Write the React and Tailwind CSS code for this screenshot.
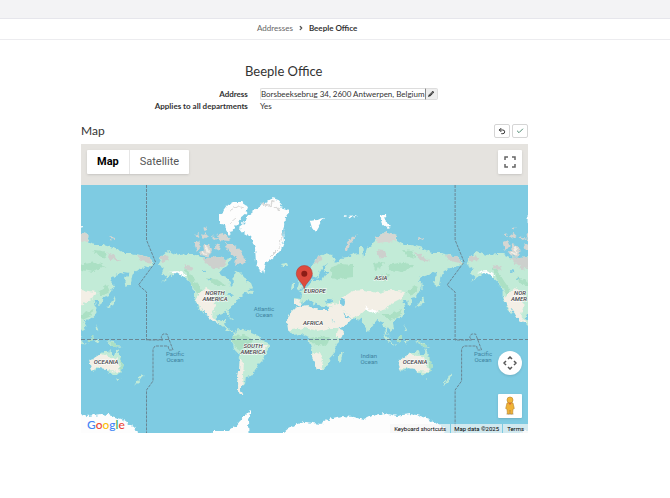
import React from "react";
import { FaPencilAlt } from "react-icons/fa";
import { Check, ChevronRight, Undo2 } from "lucide-react";

const WORLD_WIDTH = 308.6;

const continents = [
  // north america
  "M158 264 L161 257 L168 251 L174 254 L181 255 L188 254 L194 254 L201 257 L211 258 L219 257 L226 259 L232 258 L228 264 L224 268 L220 273 L224 277 L229 279 L231 287 L234 284 L233 275 L235 271 L239 272 L244 277 L247 281 L251 283 L253 288 L246 290 L254 291 L252 294 L245 293 L241 297 L237 300 L234 305 L227 310 L231 316 L229 316 L226 312 L218 314 L217 319 L220 322 L223 320 L226 320 L224 324 L227 328 L230 330 L234 331 L233 333 L228 331 L223 326 L217 323 L210 320 L206 313 L202 308 L204 315 L200 310 L197 303 L194 297 L194 291 L190 283 L183 276 L175 273 L170 277 L162 282 L167 277 L162 273 L164 268 Z",
  // south america
  "M233 334 L238 329 L244 330 L251 332 L256 334 L259 337 L261 341 L266 342 L270 344 L270 348 L267 351 L264 359 L259 364 L255 371 L251 376 L246 377 L245 384 L241 387 L241 391 L243 396 L240 394 L237 390 L237 382 L239 372 L240 356 L234 349 L232 341 Z",
  // europe and asia
  "M294 304 L294 298 L301 299 L302 294 L299 291 L305 288 L310 283 L312 277 L313 282 L322 280 L325 275 L331 272 L324 272 L326 266 L328 263 L323 266 L320 271 L318 278 L315 277 L312 273 L311 267 L316 258 L324 253 L332 255 L336 260 L332 262 L337 263 L341 258 L347 257 L354 254 L359 253 L359 247 L362 247 L364 257 L367 248 L372 245 L376 238 L387 232 L397 235 L397 241 L404 245 L412 245 L419 247 L427 250 L432 253 L441 253 L449 255 L457 257 L464 263 L459 266 L454 267 L444 271 L441 275 L439 285 L435 287 L434 280 L438 273 L432 272 L427 275 L421 277 L419 281 L422 285 L419 292 L416 297 L412 298 L411 304 L408 305 L407 300 L403 300 L405 307 L405 313 L400 318 L395 320 L393 323 L394 328 L390 331 L387 327 L387 332 L390 337 L386 333 L385 328 L382 322 L377 320 L371 327 L368 332 L364 325 L361 320 L357 319 L350 318 L343 313 L347 318 L352 319 L347 324 L337 328 L333 320 L328 312 L329 307 L322 307 L319 306 L316 302 L314 306 L311 301 L307 300 L303 303 L300 306 Z",
  // africa
  "M295 308 L302 306 L310 305 L312 308 L318 310 L327 310 L330 312 L332 320 L338 329 L344 330 L342 337 L336 343 L335 352 L330 358 L328 365 L322 370 L317 370 L312 357 L312 350 L309 342 L308 337 L300 334 L293 335 L288 329 L287 320 L291 312 Z",
  // australia
  "M398 361 L406 356 L412 352 L416 352 L419 350 L420 355 L424 355 L426 349 L429 357 L432 366 L430 372 L424 375 L417 372 L415 369 L409 368 L401 371 L399 366 Z",
  // smaller islands
  "M343 351 L341 361 L338 362 L338 356 Z",
  "M425 378 L428 378 L426 380 Z",
  "M451 373 L452 376 L447 383 L443 385 L448 378 Z",
  "M414 341 L422 342 L430 348 L424 347 L419 344 Z",
  "M397 339 L402 335 L402 341 L398 342 Z",
  "M383 333 L387 337 L392 343 L398 345 L391 344 L386 339 Z",
  "M404 340 L408 340 L406 344 Z",
  "M404 325 L407 331 L405 332 Z",
  "M423 296 L424 300 L422 305 L415 308 L420 302 Z",
  "M422 283 L423 287 L421 292 Z",
  "M298 280 L303 288 L297 290 Z",
  "M292 284 L295 283 L295 288 L291 289 Z",
  "M280 264 L287 263 L288 267 L282 267 Z",
  "M225 316 L234 319 L233 320 Z",
];

const greyIslands = [
  "M194 243 L199 241 L201 246 L197 251 Z",
  "M203 244 L208 245 L212 250 L209 257 L201 255 L199 252 L204 250 Z",
  "M201 236 L205 233 L208 236 L204 239 Z",
  "M210 236 L219 238 L214 240 Z",
  "M203 228 L207 226 L206 230 Z",
  "M195 235 L199 233 L198 237 Z",
  "M217 235 L222 233 L231 239 L229 241 L219 240 Z",
  "M225 244 L232 244 L239 249 L243 256 L246 264 L240 263 L235 266 L236 258 L229 252 Z",
  "M216 244 L220 246 L219 250 L215 248 Z",
  "M345 251 L346 245 L350 239 L358 234 L351 242 L348 250 Z",
  "M376 238 L387 232 L397 235 L396 241 L386 242 L378 243 Z",
  "M418 237 L424 238 L423 240 L419 239 Z",
];

const iceIslands = [
  "M223 212 L228 205 L234 202 L241 202 L248 207 L246 213 L241 217 L238 224 L234 228 L229 235 L226 230 L225 225 L219 223 L219 215 Z",
  "M239 227 L244 223 L248 215 L258 207 L266 202 L273 198 L281 201 L280 207 L290 210 L285 218 L284 226 L283 232 L284 242 L281 250 L273 258 L266 263 L263 273 L259 271 L256 262 L255 248 L251 237 L244 233 Z",
  "M310 221 L316 220 L324 218 L321 222 L315 232 L312 228 Z",
  "M342 217 L347 216 L345 218 Z",
  "M348 216 L357 215 L352 218 Z",
  "M380 214 L385 215 L386 222 L391 227 L387 228 L382 224 Z",
  "M212 445 L213 431 L228 431 L236 426 L244 416 L251 409 L248 420 L249 445 Z",
  "M283 445 L284 432 L289 428 L295 425 L305 422 L321 424 L329 419 L341 416 L354 417 L364 420 L372 416 L384 413 L397 416 L409 414 L417 415 L430 419 L437 424 L444 427 L448 445 Z",
];

const deepGreen = [
  "M330 268 L340 264 L353 265 L353 277 L338 279 L332 277 Z",
  "M373 264 L384 262 L380 268 L375 270 Z",
  "M388 265 L404 262 L414 266 L402 272 L390 270 Z",
  "M374 276 L390 275 L386 280 L377 281 Z",
  "M402 250 L412 251 L416 258 L407 256 Z",
  "M232 336 L244 335 L253 339 L248 346 L240 350 L234 347 Z",
  "M308 338 L326 336 L331 341 L324 346 L313 344 Z",
  "M184 267 L190 272 L196 282 L204 293 L201 300 L195 290 L188 279 Z",
  "M206 277 L218 280 L226 286 L216 286 Z",
  "M381 314 L391 314 L402 309 L400 316 L391 320 Z",
  "M407 292 L416 285 L418 291 L410 296 Z",
  "M429 355 L432 358 L432 370 L429 372 Z",
  "M396 335 L402 335 L402 342 L397 342 Z",
  "M416 341 L429 346 L425 348 Z",
];

const dryLand = [
  "M284 306 L300 304 L333 309 L342 328 L330 328 L318 331 L304 328 L284 331 Z",
  "M328 307 L340 306 L352 318 L347 325 L337 329 L333 321 Z",
  "M343 297 L352 291 L364 290 L378 293 L390 290 L405 292 L402 298 L392 303 L387 309 L377 312 L367 309 L361 314 L352 318 L344 310 L337 308 L326 305 L339 303 Z",
  "M195 298 L206 288 L214 292 L215 306 L212 316 L218 323 L208 320 L200 308 Z",
  "M238 355 L244 363 L243 375 L244 390 L243 397 L237 392 Z",
  "M396 359 L410 354 L424 358 L429 372 L416 371 L406 367 L399 372 Z",
  "M311 355 L320 352 L323 360 L321 371 L315 371 Z",
  "M338 327 L346 329 L341 338 L336 338 Z",
  "M293 299 L301 300 L300 306 L294 305 Z",
  "M260 345 L267 345 L262 352 Z",
];

const greyLand = [
  "M202 258 L213 256 L228 259 L223 267 L213 269 L206 263 Z",
  "M160 257 L167 255 L170 260 L162 262 Z",
  "M184 264 L191 266 L194 271 L187 270 Z",
  "M376 250 L384 251 L386 257 L380 259 Z",
  "M415 252 L422 255 L430 262 L420 260 Z",
  "M446 255 L458 257 L462 263 L454 262 L448 260 Z",
  "M314 262 L318 257 L323 256 L317 264 Z",
];

const iceLand = [
  "M168 272 L178 271 L187 275 L184 277 L177 274 Z",
  "M364 305 L369 309 L378 311 L375 314 L366 309 Z",
];

const dateLine =
  "M146.5 185 V240 L155.5 262 L138.5 285 L146.5 292 V340 H163 L161 337 L163 334 H167 L173 350 H169 L168 346 H155 L153 349 V381 L146.5 390 V433";

const continentLabels = [
  { x: 215, y: 295, lines: ["NORTH", "AMERICA"] },
  { x: 253, y: 348, lines: ["SOUTH", "AMERICA"] },
  { x: 315, y: 293, lines: ["EUROPE"] },
  { x: 313, y: 325, lines: ["AFRICA"] },
  { x: 381, y: 280, lines: ["ASIA"] },
  { x: 106, y: 364, lines: ["OCEANIA"] },
  { x: 415, y: 364, lines: ["OCEANIA"] },
];

const oceanLabels = [
  { x: 264, y: 311, lines: ["Atlantic", "Ocean"] },
  { x: 369, y: 358, lines: ["Indian", "Ocean"] },
  { x: 175, y: 356, lines: ["Pacific", "Ocean"] },
  { x: 483, y: 356, lines: ["Pacific", "Ocean"] },
];

const Shapes = ({ paths, fill }) => (
  <g fill={fill}>
    {paths.map((d) => (
      <path key={d} d={d} />
    ))}
  </g>
);

const MapLabel = ({ x, y, lines }) => (
  <text x={x} y={y}>
    {lines.map((line, i) => (
      <tspan key={line} x={x} y={y + i * 6}>
        {line}
      </tspan>
    ))}
  </text>
);

const WorldMap = () => {
  const copies = [-WORLD_WIDTH, 0, WORLD_WIDTH];

  return (
    <svg
      viewBox="81 144 447 289"
      preserveAspectRatio="xMidYMid slice"
      className="absolute inset-0 w-full h-full"
      role="img"
      aria-label="World map"
    >
      <defs>
        <filter id="coast" x="0" y="0" width="100%" height="100%">
          <feTurbulence type="fractalNoise" baseFrequency="0.25" numOctaves="3" seed="4" />
          <feDisplacementMap in="SourceGraphic" scale="5" xChannelSelector="R" yChannelSelector="G" />
        </filter>
        <clipPath id="land">
          {continents.map((d) => (
            <path key={d} d={d} />
          ))}
        </clipPath>
        <g id="world">
          <Shapes paths={continents} fill="#c2ebd7" />
          <g clipPath="url(#land)">
            <Shapes paths={deepGreen} fill="#abe0c4" />
            <Shapes paths={dryLand} fill="#f3efe6" />
            <Shapes paths={greyLand} fill="#cdd0cd" />
            <Shapes paths={iceLand} fill="#ffffff" />
          </g>
          <Shapes paths={greyIslands} fill="#d5d6d2" />
          <Shapes paths={iceIslands} fill="#fdfdfd" />
          <g fill="none" stroke="#d9d9d8">
            <path d="M262 203 L270 206 L274 201 M274 207 L281 210" strokeWidth="2" />
            <path d="M229 211 L238 206 L244 208 M228 224 L236 217 M283 232 L279 248 L269 258" />
          </g>
          <path d="M206 246 L208 253 M202 253 L207 254" fill="none" stroke="#f3efe6" strokeWidth="2" />
          <g fill="#7ecbe2">
            <ellipse cx="329" cy="301" rx="4" ry="2" />
            <ellipse cx="343" cy="302" rx="2" ry="4" />
            <path d="M343 312 L350 319 L347 318 Z" />
            <path d="M202 270 L206 271 L203 273 Z M207 278 L212 279 L208 280 Z" />
            <ellipse cx="231" cy="295" rx="3" ry="1" />
          </g>
        </g>
      </defs>

      <rect x="81" y="144" width="447" height="42" fill="#e5e3df" />
      <rect x="81" y="185" width="447" height="248" fill="#7ecbe2" />

      <g filter="url(#coast)">
        <rect x="60" y="185" width="500" height="270" fill="none" />
        {copies.map((dx) => (
          <use key={dx} href="#world" x={dx} />
        ))}
      </g>

      <g fill="none" stroke="#6a8794" strokeDasharray="3 1">
        <path d={dateLine} />
        <path d={dateLine} transform={`translate(${WORLD_WIDTH} 0)`} />
        <path d="M81 339.5 H528" strokeDasharray="4 2" />
      </g>

      <g textAnchor="middle" fontFamily="Roboto, sans-serif" fontSize="6">
        <g fontStyle="italic" fontWeight="500" fill="#3c4043" stroke="#ffffff" strokeWidth="1" paintOrder="stroke">
          {continentLabels.map((label) => (
            <MapLabel key={label.x} {...label} />
          ))}
          <g textAnchor="start">
            <text x="514" y="295">NOR</text>
            <text x="511" y="301">AMER</text>
          </g>
        </g>
        <g fill="#3f83a0">
          {oceanLabels.map((label) => (
            <MapLabel key={label.x} {...label} />
          ))}
        </g>
      </g>

      <path
        d="M304.3 288.5 C303.3 283 296.3 279.5 296.3 273.5 A8 8 0 0 1 312.3 273.5 C312.3 279.5 305.3 283 304.3 288.5 Z"
        fill="#dd4b3e"
        stroke="#b93a30"
        strokeWidth="0.6"
      />
      <circle cx="304.3" cy="273.7" r="3" fill="#8c1d16" />
    </svg>
  );
};

const Pegman = () => (
  <svg viewBox="0 0 12 20" className="w-3 h-5">
    <ellipse cx="6" cy="18" rx="4" ry="1" fill="#d8d8d8" />
    <path
      d="M3 7 Q6 5.5 9 7 L10.3 12.5 L9 13 L8.6 18 H6.5 L6 14 L5.5 18 H3.4 L3 13 L1.7 12.5 Z"
      fill="#efb236"
      stroke="#b98526"
      strokeWidth="0.6"
    />
    <path d="M4 6.5 L6 9 L8 6.5 Z" fill="#e0603c" />
    <circle cx="6" cy="4" r="3" fill="#f2b53a" stroke="#b98526" strokeWidth="0.6" />
  </svg>
);

const GoogleLogo = () => (
  <a
    href="#google"
    aria-label="Google"
    className="font-['Lato'] text-[12px] leading-4 font-medium [text-shadow:0_0_1px_#fff,0_0_1px_#fff,0_0_2px_#fff]"
  >
    <span className="text-[#4285f4]">G</span>
    <span className="text-[#ea4335]">o</span>
    <span className="text-[#fbbc05]">o</span>
    <span className="text-[#4285f4]">g</span>
    <span className="text-[#34a853]">l</span>
    <span className="text-[#ea4335]">e</span>
  </a>
);

const MapPanel = () => {
  return (
    <div className="relative h-[289px] overflow-hidden bg-[#7ecbe2] font-['Roboto',sans-serif]">
      <WorldMap />

      <div className="absolute top-1.5 left-1.5 flex h-6 bg-white rounded-[1px] shadow text-[11px]">
        <button className="px-2.5 font-bold text-black border-r border-[#e6e6e6]">Map</button>
        <button className="px-2.5 text-[#565656]">Satellite</button>
      </div>

      <button
        aria-label="Toggle fullscreen view"
        className="absolute top-1.5 right-1.5 w-6 h-6 flex items-center justify-center bg-white rounded-[1px] shadow"
      >
        <svg viewBox="0 0 12 12" className="w-3 h-3" fill="none" stroke="#666" strokeWidth="1.5">
          <path d="M1 4 V1 H4 M8 1 H11 V4 M11 8 V11 H8 M4 11 H1 V8" />
        </svg>
      </button>

      <div className="absolute bottom-[15px] right-1.5 flex flex-col gap-[19px]">
        <button
          aria-label="Map camera controls"
          className="w-6 h-6 flex items-center justify-center bg-white rounded-full shadow"
        >
          <svg viewBox="0 0 14 14" className="w-3.5 h-3.5" fill="none" stroke="#555" strokeWidth="1.5">
            <path d="M5 3 L7 1 L9 3 M5 11 L7 13 L9 11 M3 5 L1 7 L3 9 M11 5 L13 7 L11 9" />
          </svg>
        </button>
        <button
          aria-label="Street View"
          className="w-6 h-6 flex items-center justify-center bg-white rounded-[1px] shadow"
        >
          <Pegman />
        </button>
      </div>

      <div className="absolute bottom-0 left-1.5">
        <GoogleLogo />
      </div>

      <div className="absolute bottom-0 right-0 flex text-[6px] leading-[9px] text-black bg-[#f5f5f5]/70">
        <button className="px-1">Keyboard shortcuts</button>
        <span className="px-[3px] border-l border-[#7ecbe2]">Map data ©2025</span>
        <a href="#terms" className="px-1 border-l border-[#7ecbe2]">
          Terms
        </a>
      </div>
    </div>
  );
};

const App = () => {
  return (
    <div className="bg-white font-['Lato',sans-serif] text-[8px] leading-3 text-[#333]">
      <header className="h-[19px] bg-[#f3f3f5] border-b border-[#e6e6ec]" />

      <nav className="flex items-center h-[21px] pl-[257px] pb-[2px] border-b border-[#ececef]">
        <a href="#addresses" className="text-[#666]">
          Addresses
        </a>
        <ChevronRight className="mx-[5px] w-1.5 h-2 text-[#555]" strokeWidth={5} />
        <span className="font-bold">Beeple Office</span>
      </nav>

      <main className="pt-[21px]">
        <h1 className="pl-[245px] text-[13px] leading-5">Beeple Office</h1>

        <div className="mt-[7px] grid grid-cols-[37%_1fr] gap-x-3">
          <label htmlFor="address" className="font-bold text-right">
            Address
          </label>
          <div className="flex h-3">
            <input
              id="address"
              type="text"
              readOnly
              value="Borsbeeksebrug 34, 2600 Antwerpen, Belgium"
              className="w-[166px] border border-[#ddd] border-r-[#888] rounded-l-[2px] outline-none"
            />
            <button
              aria-label="Edit address"
              className="w-3 flex items-center justify-center bg-[#eee] border border-l-0 border-[#ddd] rounded-r-[2px]"
            >
              <FaPencilAlt className="w-1.5 h-1.5" />
            </button>
          </div>
          <span className="font-bold text-right">Applies to all departments</span>
          <span>Yes</span>
        </div>

        <section className="mt-3 ml-[81px] mr-[142px]">
          <div className="flex items-center justify-between h-3.5">
            <h2 className="text-[12px]">Map</h2>
            <div className="flex gap-[2px]">
              <button
                aria-label="Undo"
                className="w-4 h-3.5 flex items-center justify-center border border-[#d5d5d5] rounded-[2px]"
              >
                <Undo2 className="w-2 h-2" strokeWidth={3} />
              </button>
              <button
                aria-label="Save"
                className="w-4 h-3.5 flex items-center justify-center border border-[#d5d5d5] rounded-[2px]"
              >
                <Check className="w-2 h-2 text-[#4f8a73]" strokeWidth={3} />
              </button>
            </div>
          </div>
          <div className="mt-1.5">
            <MapPanel />
          </div>
        </section>
      </main>
    </div>
  );
};

export default App;
